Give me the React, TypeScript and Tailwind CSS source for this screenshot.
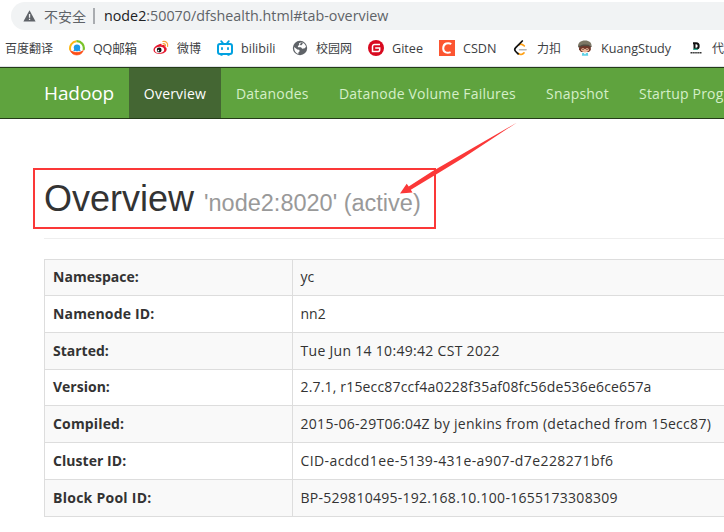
import type { ReactNode } from "react";

const ui = "font-['Open_Sans','Noto_Sans_CJK_SC',sans-serif]";

function WarningIcon() {
  return (
    <svg className="h-[12px] w-[13px] shrink-0" viewBox="0 0 13 12">
      <path d="M6.5 .3 12.6 11.5H.4Z" fill="#5f6368" />
      <path d="M5.9 4h1.3v3.8H5.9zM5.9 8.8h1.3v1.3H5.9z" fill="#f1f3f4" />
    </svg>
  );
}

function MailIcon() {
  return (
    <svg className="h-4 w-4" viewBox="0 0 16 16" fill="none">
      <path d="M1.3 10.2A7 7 0 0 1 7.5 1.3" stroke="#fcb814" strokeWidth="2" />
      <path d="M7.5 1.2A7 7 0 0 1 14.6 10" stroke="#7ac329" strokeWidth="2.2" />
      <path d="M1.300 10.500A7 7 0 0 0 14.300 10.500C11.500 13 5 13.200 1.300 10.500Z" fill="#fd4d15" stroke="#fd4d15" strokeWidth=".8" />
      <circle cx="8" cy="7.600" r="3.200" fill="#1e9be8" />
      <path d="m5.200 9.200-1 2 2.500-.4 1.300.7 1.400-.7 2.400.4-1-2Z" fill="#1e9be8" />
    </svg>
  );
}

function WeiboIcon() {
  return (
    <svg className="h-4 w-4" viewBox="0 0 16 16" fill="none">
      <path d="M6.200 4.300C8 3.300 9 3.800 8.600 5.500c2-.8 3.900-.5 3.200 1.300 1.300.5 2 1.300 1.900 2.400C13.500 12.100 10 14 6.400 13.800 3 13.700.4 12.100.5 9.700.6 7.700 3.500 5.300 6.200 4.300Z" fill="#e6162d" />
      <ellipse cx="6.500" cy="9.900" rx="4.700" ry="3.100" transform="rotate(-8 6.500 9.900)" fill="#fff" />
      <circle cx="6.200" cy="10" r="2.400" fill="#111" />
      <circle cx="5.400" cy="10.600" r=".8" fill="#fff" />
      <path d="M9.800 1.500c3.300-.7 5.700 1.900 4.800 5M10 3.800c1.700-.4 2.900.8 2.400 2.400" stroke="#f9a13a" strokeWidth="1.200" strokeLinecap="round" />
    </svg>
  );
}

function BilibiliIcon() {
  return (
    <svg className="h-4 w-4" viewBox="0 0 16 16" fill="none" stroke="#00a1e0" strokeLinecap="round">
      <rect x="1" y="4" width="14" height="10" rx="2" strokeWidth="2" />
      <path d="m4.200 1.200 2 2.300M11.800 1.200l-2 2.300" strokeWidth="1.800" />
      <path d="M5 8v1.200M11 8v1.200" strokeWidth="1.800" />
      <path d="M4 15h1M11 15h1" strokeWidth="1.500" />
    </svg>
  );
}

function GlobeIcon() {
  return (
    <svg className="h-4 w-4" viewBox="0 0 16 16">
      <circle cx="8" cy="8" r="7.200" fill="#5f6368" />
      <path d="M9.200 2.300 7 3.200l.3 1.700-1.500 1 .3 1.300H9l1.200 1.500 2.600-.4 1.200-1.500A6 6 0 0 0 9.200 2.300ZM2.200 7l3.100 2.400 1.900.3.5 1.600-1.200 1-.2 1.700C3.700 13.200 1.800 10.300 2.200 7Z" fill="#fff" />
      <path d="m9.400 2.200 1.500 1-.8 1.400L9 5.600 7.900 4.400Z" fill="#5f6368" />
    </svg>
  );
}

function GiteeIcon() {
  return (
    <svg className="h-4 w-4" viewBox="0 0 16 16">
      <circle cx="8" cy="8" r="8" fill="#d8091f" />
      <path d="M12 4.400H6.500A2 2 0 0 0 4.500 6.400v5.200h5.300a1.900 1.900 0 0 0 1.900-1.900V8H7.200" fill="none" stroke="#fff" strokeWidth="1.500" />
    </svg>
  );
}

function CsdnIcon() {
  return (
    <svg className="h-4 w-4" viewBox="0 0 16 16">
      <path d="M0 0h16v16H0z" fill="#fc5531" />
      <path d="M12.300 4C9.300 2.300 4.300 3 4.200 8.300c0 4.400 4.300 5.300 7.400 3.800" fill="none" stroke="#fff" strokeWidth="2" />
    </svg>
  );
}

function LeetCodeIcon() {
  return (
    <svg className="h-4 w-4" viewBox="0 0 16 16" fill="none" strokeLinecap="round" strokeWidth="1.700">
      <path d="M11.300 5.900 9.600 4.700C8.300 3.900 7 4 6 5" stroke="#ffa116" />
      <path d="M6.500 9.800h6.600" stroke="#b3b3b3" strokeWidth="1.500" />
      <path d="M11 12.900c-1.500 1.600-4 2-5.600.6" stroke="#ffa116" />
      <path d="M9.300 1 2.700 7.600C1.400 9 1.500 10.300 2.700 11.500l2.400 2.300" stroke="#111" />
    </svg>
  );
}

function KuangIcon() {
  return (
    <svg className="h-4 w-4" viewBox="0 0 16 16">
      <path d="M2.200 6h11.600v4L12 12H4L2 9.500Z" fill="#70382a" />
      <path d="M4.200 8h7.600v2.700L8 13 4.200 10.700Z" fill="#eeb99b" />
      <path d="M4 6.500h8v2.500l-2-1-2 1.200-2-1.200-2 1Z" fill="#70382a" />
      <path d="M1 6.500C1 2.800 3.500.5 8 .5s6.500 2.400 6.600 5.400C11.200 4.700 6 4.600 1 6.500Z" fill="#7c7765" />
      <path d="M1 6.500C5 4.200 10 4 14.600 5.900v1.200C10 5.300 5 5.700 1.300 7.400Z" fill="#514c41" />
      <path d="m5.200 12.700 2.800.6 2.900-.6.3 3H4.900Z" fill="#5fd2e7" />
      <path d="m6.500 12.500 1.500 2 1.500-2Z" fill="#fff" />
      <path d="M6 9v1M10 9v1" stroke="#45251e" />
    </svg>
  );
}

function DIcon() {
  return (
    <svg className="h-4 w-4" viewBox="0 0 16 16" fill="none">
      <path d="M6.500 3.300v5.500h1.700c3.300 0 3.300-5.500 0-5.500H5" stroke="#111" strokeWidth="2" />
      <path d="M5.500 9.300h4" stroke="#25b99a" strokeWidth="1.300" />
      <path d="M2.500 12.800h11" stroke="#333" strokeWidth="1.400" strokeDasharray="1.500 .4" />
    </svg>
  );
}

function Bookmark({ icon, label, box, text = "" }: { icon?: ReactNode; label: string; box: string; text?: string }) {
  return (
    <div className={`flex h-full shrink-0 items-center gap-2 ${box}`}>
      {icon && <span className="shrink-0">{icon}</span>}
      <span className={`pt-[2px] ${text}`}>{label}</span>
    </div>
  );
}

const rows = [
  { name: "Namespace:", value: "yc", height: "h-[36px]", nameText: "tracking-[0.03px]", valueText: "" },
  { name: "Namenode ID:", value: "nn2", height: "h-[37px]", nameText: "tracking-[0.16px]", valueText: "" },
  { name: "Started:", value: "Tue Jun 14 10:49:42 CST 2022", height: "h-[37px]", nameText: "", valueText: "tracking-[0.3px]" },
  { name: "Version:", value: "2.7.1, r15ecc87ccf4a0228f35af08fc56de536e6ce657a", height: "h-[36px]", nameText: "", valueText: "tracking-[0.17px]" },
  { name: "Compiled:", value: "2015-06-29T06:04Z by jenkins from (detached from 15ecc87)", height: "h-[37px]", nameText: "tracking-[0.15px]", valueText: "tracking-[0.29px]" },
  { name: "Cluster ID:", value: "CID-acdcd1ee-5139-431e-a907-d7e228271bf6", height: "h-[37px]", nameText: "tracking-[0.05px]", valueText: "tracking-[0.4px]" },
  { name: "Block Pool ID:", value: "BP-529810495-192.168.10.100-1655173308309", height: "h-[37px]", nameText: "tracking-[0.26px]", valueText: "tracking-[0.27px]" },
];

export default function App() {
  return (
    <div className={`relative h-[532px] w-[724px] overflow-hidden bg-white text-[14px] whitespace-nowrap text-[#333] ${ui}`}>
      <div className="flex h-[30px] pt-[2px] pl-[11px]">
        <div className="flex h-[28px] w-full items-center rounded-l-full bg-[#f1f3f4] pl-[12px] text-[14.3px] text-[#5f6368]">
          <WarningIcon />
          <span className="ml-[8px] w-[49px] text-[14px]">不安全</span>
          <span className="mr-[9px] h-4 w-[2px] bg-[#a9acb0]" />
          <span>
            <span className="text-[#202124]">node2</span>:50070/dfshealth.html#tab-overview
          </span>
        </div>
      </div>

      <div className="flex h-[36px] items-center text-[12.6px] text-[#3c4043]">
        <Bookmark label="百度翻译" box="ml-[5px] w-[64px]" text="text-[12px]" />
        <Bookmark icon={<MailIcon />} label="QQ邮箱" box="w-[84px]" text="tracking-[-0.2px]" />
        <Bookmark icon={<WeiboIcon />} label="微博" box="w-[64px]" text="text-[12px]" />
        <Bookmark icon={<BilibiliIcon />} label="bilibili" box="w-[75px]" />
        <Bookmark icon={<GlobeIcon />} label="校园网" box="w-[76px]" text="text-[12px]" />
        <Bookmark icon={<GiteeIcon />} label="Gitee" box="w-[71px]" />
        <Bookmark icon={<CsdnIcon />} label="CSDN" box="w-[74px]" />
        <Bookmark icon={<LeetCodeIcon />} label="力扣" box="w-[64px]" text="text-[12px]" />
        <Bookmark icon={<KuangIcon />} label="KuangStudy" box="w-[111px]" />
        <Bookmark icon={<DIcon />} label="代" box="w-[36px]" text="text-[12px]" />
      </div>

      <nav className="flex h-[53px] border-t border-t-[#dee1e6] tracking-[0.2px] text-[#d5efc8]">
        <div className="flex w-full items-stretch border-y border-[#243b18] bg-[#5fa33e]">
          <span className="flex w-[129px] shrink-0 items-center pl-[44px] text-[19px] tracking-[-0.1px] text-white">Hadoop</span>
          <span className="flex w-[92px] shrink-0 items-center justify-center bg-[#446633] text-white">Overview</span>
          <span className="flex w-[103px] shrink-0 items-center pl-[15px]">Datanodes</span>
          <span className="flex w-[207px] shrink-0 items-center pl-[15px]">Datanode Volume Failures</span>
          <span className="flex w-[93px] shrink-0 items-center pl-[15px]">Snapshot</span>
          <span className="flex shrink-0 items-center pl-[15px]">Startup Prog</span>
        </div>
      </nav>

      <main className="pt-[49px]">
        <div className="ml-[33px] h-[61px] w-[403px] border-2 border-[#fb3838] pl-[9px]">
          <h1 className="pt-[9px] font-['Liberation_Sans',Arial,sans-serif] text-[36px] leading-[40px]">
            Overview <small className="text-[23.5px] text-[#999]">'node2:8020' (active)</small>
          </h1>
        </div>
        <div className="mt-[9px] ml-[44px] h-px bg-[#eee]" />
        <div className="mt-[20px] ml-[44px] border-t border-l border-[#ddd]">
          {rows.map((row) => (
            <div key={row.name} className={`flex border-b border-[#ddd] odd:bg-[#f9f9f9] ${row.height}`}>
              <div className="flex w-[248px] shrink-0 items-center border-r border-[#ddd] pb-[2px] pl-[8px] font-bold">
                <span className={row.nameText}>{row.name}</span>
              </div>
              <div className="flex items-center pb-[2px] pl-[7.5px]">
                <span className={row.valueText}>{row.value}</span>
              </div>
            </div>
          ))}
        </div>
      </main>

      <svg className="absolute top-[120px] left-[396px]" width="124" height="80" viewBox="396 120 124 80">
        <path d="M400 193.600 406.700 183.800 408.700 186.600 432 171.500 458 156.500 517 122.500 463 158 436 174.500 410.800 189.800 412.500 192.500Z" fill="#fb3838" />
      </svg>
    </div>
  );
}
